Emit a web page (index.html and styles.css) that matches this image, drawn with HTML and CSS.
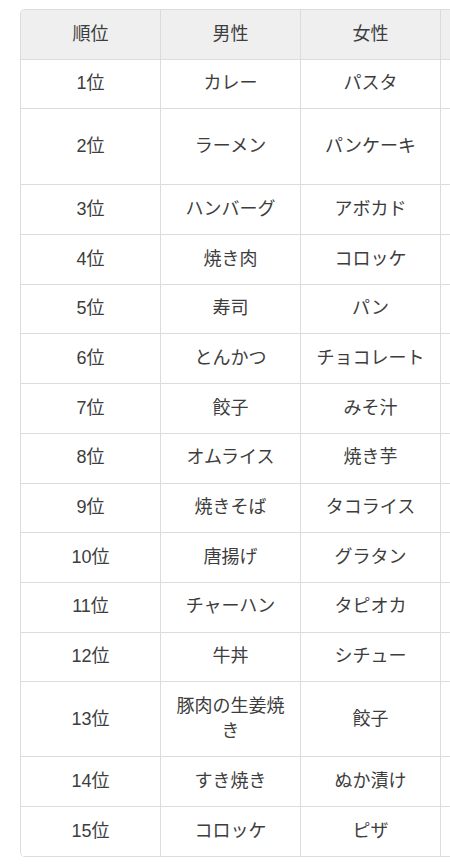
FILE: index.html
```html
<!DOCTYPE html>
<html lang="ja">
<head>
<meta charset="utf-8">
<title>好きな食べ物ランキング</title>
<link rel="stylesheet" href="styles.css">
</head>
<body>
<div class="scroller">
  <div class="frame">
    <table class="ranking">
      <thead>
        <tr><th>順位</th><th>男性</th><th>女性</th><th></th></tr>
      </thead>
      <tbody>
        <tr><td>1位</td><td>カレー</td><td>パスタ</td><td></td></tr>
        <tr class="tall"><td>2位</td><td>ラーメン</td><td>パンケーキ</td><td></td></tr>
        <tr><td>3位</td><td>ハンバーグ</td><td>アボカド</td><td></td></tr>
        <tr><td>4位</td><td>焼き肉</td><td>コロッケ</td><td></td></tr>
        <tr><td>5位</td><td>寿司</td><td>パン</td><td></td></tr>
        <tr><td>6位</td><td>とんかつ</td><td>チョコレート</td><td></td></tr>
        <tr><td>7位</td><td>餃子</td><td>みそ汁</td><td></td></tr>
        <tr><td>8位</td><td>オムライス</td><td>焼き芋</td><td></td></tr>
        <tr><td>9位</td><td>焼きそば</td><td>タコライス</td><td></td></tr>
        <tr><td>10位</td><td>唐揚げ</td><td>グラタン</td><td></td></tr>
        <tr><td>11位</td><td>チャーハン</td><td>タピオカ</td><td></td></tr>
        <tr><td>12位</td><td>牛丼</td><td>シチュー</td><td></td></tr>
        <tr><td>13位</td><td>豚肉の生姜焼き</td><td>餃子</td><td></td></tr>
        <tr><td>14位</td><td>すき焼き</td><td>ぬか漬け</td><td></td></tr>
        <tr><td>15位</td><td>コロッケ</td><td>ピザ</td><td></td></tr>
      </tbody>
    </table>
  </div>
</div>
</body>
</html>
```
FILE: styles.css
```css
html, body {
  margin: 0;
  padding: 0;
  background: #ffffff;
}

body {
  font-family: "Liberation Sans", "Noto Sans CJK JP", sans-serif;
  color: #3d3d3d;
  overflow-x: hidden;
}

.scroller {
  padding: 9px 0 0 20px;
  overflow: hidden;
}

.frame {
  width: 560px;
  border-top: 1px solid #dcdcdc;
  border-left: 1px solid #dcdcdc;
  border-radius: 5px;
  overflow: hidden;
}

.ranking {
  width: 560px;
  table-layout: fixed;
  border-collapse: separate;
  border-spacing: 0;
  font-size: 18px;
  line-height: 25.5px;
}

.ranking th,
.ranking td {
  width: 140px;
  box-sizing: border-box;
  padding: 11.6px 10px;
  text-align: center;
  vertical-align: middle;
  border-right: 1px solid #dcdcdc;
  border-bottom: 1px solid #dcdcdc;
  font-weight: normal;
}

.ranking th {
  background: #efefef;
}

.ranking .tall td {
  height: 76px;
}
```
